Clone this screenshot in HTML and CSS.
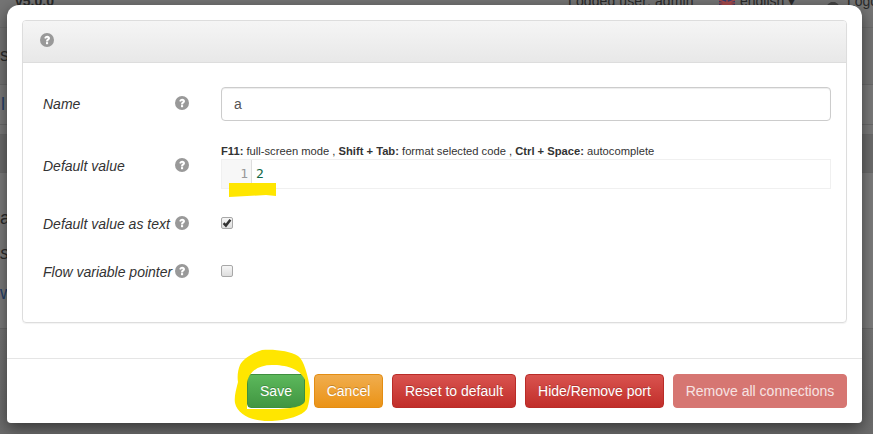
FILE: index.html
```html
<!DOCTYPE html>
<html lang="en">
<head>
<meta charset="utf-8">
<title>Port settings</title>
<link rel="stylesheet" href="styles.css">
</head>
<body>
<div class="page">
  <div class="topbar">
    <span class="version">v5.0.0</span>
    <span class="topright">Logged user: admin</span>
    <svg class="flag" viewBox="0 0 16 6"><rect width="16" height="6" fill="#3a3f6e"/><path d="M0 0 16 6M16 0 0 6M8 0V6M0 3H16" stroke="#a84a4a" stroke-width="1.5"/></svg>
    <span class="lang">english ▾</span>
    <svg class="user" viewBox="0 0 12 6"><path d="M0 6C1 3 3 3 4 2H8C9 3 11 3 12 6Z" fill="#444"/></svg>
    <span class="logout">Logout</span>
  </div>
  <div class="bgrow r1">s</div>
  <div class="bgrow r2 link">l</div>
  <div class="bgrow r3"></div>
  <div class="bgrow r4"></div>
  <div class="bgrow r5">a</div>
  <div class="bgrow r6"><i>s</i></div>
  <div class="bgrow r7 link">w</div>
  <div class="bgrow r8"></div>
</div>
<div class="modal">
  <div class="modal-body">
    <section class="panel">
      <header class="panel-heading">
        <svg class="help" viewBox="0 0 14 14"><use href="#q"/></svg>
      </header>
      <div class="panel-body">
        <div class="field f-name">
          <label class="lbl">Name</label>
          <svg class="help" viewBox="0 0 14 14"><use href="#q"/></svg>
          <div class="ctl"><input class="text-input" type="text" value="a"></div>
        </div>
        <div class="field f-code">
          <label class="lbl">Default value</label>
          <svg class="help" viewBox="0 0 14 14"><use href="#q"/></svg>
          <div class="ctl">
            <p class="hint"><b>F11:</b> full-screen mode , <b>Shift + Tab:</b> format selected code , <b>Ctrl + Space:</b> autocomplete</p>
            <div class="editor"><span class="gutter">1</span><span class="code">2</span></div>
          </div>
        </div>
        <div class="field f-check">
          <label class="lbl">Default value as text</label>
          <svg class="help" viewBox="0 0 14 14"><use href="#q"/></svg>
          <div class="ctl"><span class="check"><svg viewBox="0 0 10 10"><path d="M1.6 5.2 3.9 7.6 8.4 1.8" fill="none" stroke="#333" stroke-width="2.5"/></svg></span></div>
        </div>
        <div class="field f-check">
          <label class="lbl">Flow variable pointer</label>
          <svg class="help" viewBox="0 0 14 14"><use href="#q"/></svg>
          <div class="ctl"><span class="check"></span></div>
        </div>
      </div>
    </section>
  </div>
  <footer class="modal-footer">
    <button class="btn save">Save</button>
    <button class="btn cancel">Cancel</button>
    <button class="btn danger reset">Reset to default</button>
    <button class="btn danger hide">Hide/Remove port</button>
    <button class="btn off">Remove all connections</button>
  </footer>
</div>
<svg class="scribble" viewBox="0 0 873 434">
  <path d="M229 183H276V196L266 195L229 197Z" fill="#ffe600"/>
  <path fill-rule="evenodd" fill="#ffe600" d="M240 365C243 359 252 353 262 350C275 349 290 351 298 356C304 360 308 376 310 389C310 396 309 404 307 409C302 416 288 420 272 421C255 422 238 416 235 403C234 397 236 390 238 382C237 376 238 370 240 365ZM247 384C248 372 258 365 272 365C285 365 300 368 305 380V400C305 407 290 409 272 409H247Z"/>
</svg>
<svg class="defs" width="0" height="0">
  <symbol id="q" viewBox="0 0 14 14">
    <circle cx="7" cy="7" r="7" fill="#999"/>
    <path d="M4.3 5.3C4.5 3.7 5.7 2.8 7.2 2.8C8.8 2.8 10 3.8 10 5.2C10 7 8.1 7 8.1 8.4H6C6 6.2 7.8 6.2 7.8 5.3C7.8 4.9 7.5 4.7 7.1 4.7C6.6 4.7 6.3 5 6.1 5.8Z" fill="#fff"/>
    <rect x="6" y="9.1" width="2.1" height="2.1" fill="#fff"/>
  </symbol>
</svg>
</body>
</html>
```
FILE: styles.css
```css
* { box-sizing: border-box; }
html, body { margin: 0; height: 434px; overflow: hidden; }
body { font-family: "Liberation Sans", Arial, sans-serif; font-size: 14px; color: #333; background: #7a7a7a; position: relative; }

.page { height: 434px; overflow: hidden; color: #2a2a2a; }
.topbar { height: 28px; position: relative; border-bottom: 1px solid #6c6c6c; background: #747474; font-size: 14px; line-height: 10px; }
.version { position: absolute; left: 15px; top: -4px; font-weight: bold; }
.topright { position: absolute; left: 568px; top: -4px; letter-spacing: .1px; }
.flag { position: absolute; left: 719px; top: 0; width: 16px; height: 6px; }
.lang { position: absolute; left: 740px; top: -4px; }
.user { position: absolute; left: 827px; top: 0; width: 12px; height: 6px; }
.logout { position: absolute; left: 847px; top: -4px; }
.bgrow { border-bottom: 1px solid #6a6a6a; font-size: 18px; overflow: hidden; }
.link { color: #24406a; }
.r1 { height: 57px; line-height: 54px; background: #747474; }
.r2 { height: 40px; line-height: 38px; padding-left: 1px; }
.r3 { height: 10px; }
.r4 { height: 38px; background: #6c6c6c; }
.r5 { height: 60px; padding-top: 30px; line-height: 30px; background: #7c7c7c; border-bottom: 0; }
.r6 { height: 40px; line-height: 40px; background: #7c7c7c; border-bottom: 0; }
.r7 { height: 56px; line-height: 40px; background: #7c7c7c; }
.r8 { height: 105px; background: linear-gradient(#747474, #6c6c6c); }

.modal { position: absolute; left: 7px; top: 5px; width: 855px; height: 418px; background: #fff; border-radius: 12px 12px 4px 4px; box-shadow: 0 5px 15px rgba(0,0,0,.5); display: flex; flex-direction: column; }
.modal-body { padding: 15px 15px 0; height: 353px; }
.panel { height: 303px; border: 1px solid #ddd; border-radius: 4px; box-shadow: 0 1px 1px rgba(0,0,0,.05); }
.panel-heading { height: 42px; padding: 12px 17px 0; background: linear-gradient(#f5f5f5, #e8e8e8); border-bottom: 1px solid #ddd; border-radius: 3px 3px 0 0; }
.help { width: 14px; height: 14px; display: block; flex: none; }
.panel-body { padding: 0 15px 0 20px; }
.field { display: flex; }
.lbl { width: 132px; flex: none; font-style: italic; white-space: nowrap; }
.field .help { margin-right: 32px; }
.ctl { flex: 1; min-width: 0; }
.f-name { padding-top: 24px; height: 81px; }
.f-name .lbl { line-height: 34px; }
.f-name .help { margin-top: 9px; }
.text-input { display: block; width: 100%; height: 34px; padding: 6px 12px; font: 14px "Liberation Sans", Arial, sans-serif; color: #555; border: 1px solid #ccc; border-radius: 4px; box-shadow: inset 0 1px 1px rgba(0,0,0,.075); background: #fff; outline: 0; }
.f-code { height: 52px; }
.f-code .lbl { padding-top: 12px; line-height: 20px; }
.f-code .help { margin-top: 14px; }
.hint { margin: 0; font-size: 11.2px; line-height: 14px; color: #333; white-space: nowrap; }
.editor { display: flex; height: 30px; margin-top: 1px; border: 1px solid #f0f0f0; font-family: "DejaVu Sans Mono", monospace; font-size: 13px; line-height: 27px; }
.gutter { width: 30px; background: #f7f7f7; border-right: 1px solid #ddd; color: #999; text-align: right; padding-right: 3px; }
.code { padding-left: 4px; color: #116644; }
.f-check { height: 48px; padding-top: 19px; }
.f-check .lbl { line-height: 20px; margin-top: -1px; height: 20px; }
.f-check .help { margin-top: 1px; }
.check { display: block; width: 12px; height: 12px; margin-top: 2px; border: 1px solid #a8a8a8; border-radius: 2px; background: linear-gradient(#f6f6f6, #dedede); }
.check svg { display: block; width: 10px; height: 10px; }
.modal-footer { height: 65px; border-top: 1px solid #e5e5e5; padding: 15px 15px 0; display: flex; justify-content: flex-end; gap: 9px; }
.btn { height: 34px; padding: 0; font: 14px "Liberation Sans", Arial, sans-serif; color: #fff; border-radius: 4px; border: 1px solid; text-shadow: 0 -1px 0 rgba(0,0,0,.2); }
.save { background: linear-gradient(#5cb85c, #419641); border-color: #3e8f3e; width: 58px; }
.cancel { background: linear-gradient(#f0ad4e, #eb9316); border-color: #e38d13; width: 69px; }
.danger { background: linear-gradient(#d9534f, #c12e2a); border-color: #b92c28; }
.reset { width: 124px; }
.hide { width: 139px; }
.off { width: 174px; background: #d67672; border-color: #d67672; color: #f6e3e2; text-shadow: none; }
.scribble { position: absolute; left: 0; top: 0; width: 873px; height: 434px; pointer-events: none; }
.defs { position: absolute; }
```
